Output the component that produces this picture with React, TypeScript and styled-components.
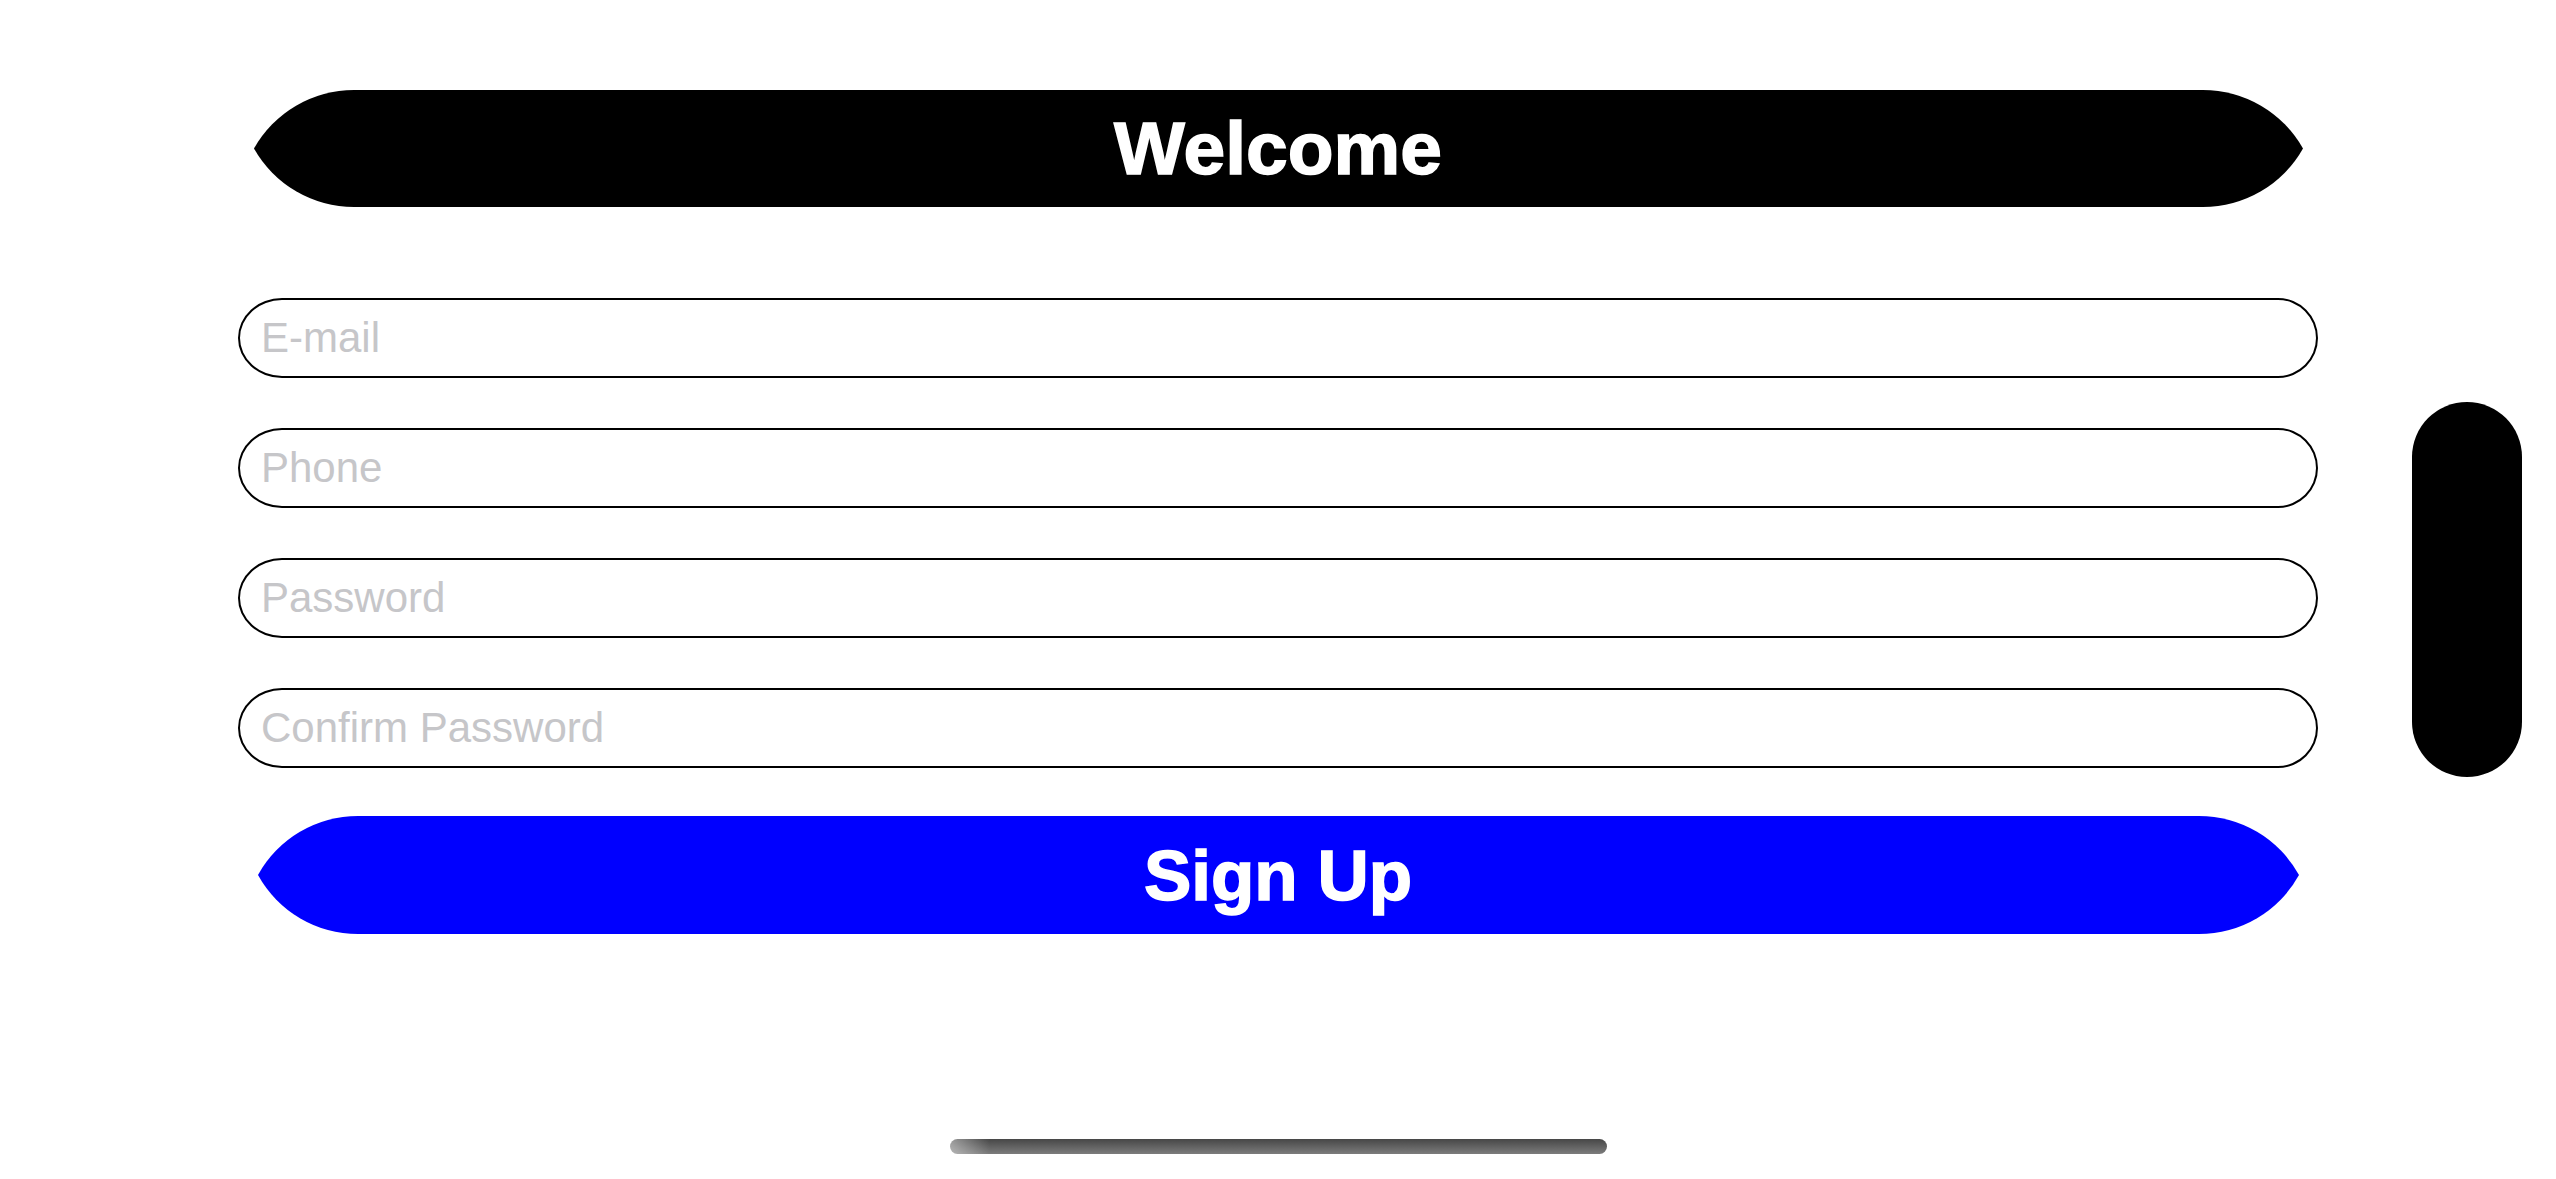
import styled, { createGlobalStyle } from "styled-components";

const GlobalStyle = createGlobalStyle`
  html, body {
    margin: 0;
    padding: 0;
    background: #ffffff;
  }
  body {
    font-family: "Liberation Sans", Arial, sans-serif;
  }
  * {
    box-sizing: border-box;
  }
`;

const Screen = styled.div`
  position: relative;
  width: 2556px;
  height: 1179px;
  overflow: hidden;
  background: #ffffff;
`;

const Form = styled.div`
  display: flex;
  flex-direction: column;
  align-items: center;
  padding-top: 90px;
`;

const Bar = styled.div<{ $width: number; $height: number; $color: string; $mt?: number }>`
  display: flex;
  flex-direction: row;
  align-items: stretch;
  width: ${(p) => p.$width}px;
  height: ${(p) => p.$height}px;
  margin-top: ${(p) => p.$mt ?? 0}px;
  color: ${(p) => p.$color};
  cursor: pointer;
`;

const BarMiddle = styled.div<{ $size: number }>`
  flex: 1;
  display: flex;
  align-items: center;
  justify-content: center;
  background: currentColor;
  margin: 0 -1px;
  span {
    color: #ffffff;
    font-family: "Liberation Sans", Arial, sans-serif;
    font-weight: 700;
    font-size: ${(p) => p.$size}px;
    line-height: 1;
    -webkit-text-stroke: 1.5px #ffffff;
  }
`;

const CapSvg = styled.svg`
  display: block;
  flex-shrink: 0;
  position: relative;
  z-index: 1;
`;

const Fields = styled.div`
  display: flex;
  flex-direction: column;
  gap: 50px;
  margin-top: 91px;
`;

const Field = styled.input`
  width: 2080px;
  height: 80px;
  border: 2px solid #000000;
  border-radius: 44px 40px 40px 44px / 40px;
  padding: 0 0 0 21px;
  font-family: "Liberation Sans", Arial, sans-serif;
  font-size: 42px;
  color: #000000;
  background: #ffffff;
  outline: none;
  &::placeholder {
    color: #c6c6c9;
  }
`;

const SideIsland = styled.div`
  position: absolute;
  left: 2412px;
  top: 402px;
  width: 110px;
  height: 375px;
  border-radius: 55px;
  background: #000000;
`;

const HomeIndicator = styled.div`
  position: absolute;
  left: 950px;
  top: 1139px;
  width: 657px;
  height: 15px;
  border-radius: 8px;
  background: linear-gradient(to right, rgba(255, 255, 255, 0.45), rgba(255, 255, 255, 0) 6%),
    linear-gradient(to bottom, #474747, #7c7c7c);
`;

function Cap({ side, w, h }: { side: "left" | "right"; w: number; h: number }) {
  const r = (w * w + (h / 2) * (h / 2)) / h;
  const d =
    side === "left"
      ? `M${w} 0 A${r} ${r} 0 0 0 0 ${h / 2} A${r} ${r} 0 0 0 ${w} ${h} Z`
      : `M0 0 A${r} ${r} 0 0 1 ${w} ${h / 2} A${r} ${r} 0 0 1 0 ${h} Z`;
  return (
    <CapSvg width={w} height={h} viewBox={`0 0 ${w} ${h}`}>
      <path d={d} fill="currentColor" />
    </CapSvg>
  );
}

function LensBar({
  label,
  width,
  height,
  color,
  size,
  mt,
}: {
  label: string;
  width: number;
  height: number;
  color: string;
  size: number;
  mt?: number;
}) {
  return (
    <Bar $width={width} $height={height} $color={color} $mt={mt}>
      <Cap side="left" w={100} h={height} />
      <BarMiddle $size={size}>
        <span>{label}</span>
      </BarMiddle>
      <Cap side="right" w={100} h={height} />
    </Bar>
  );
}

export default function App() {
  const fields = [
    { name: "email", placeholder: "E-mail", type: "email" },
    { name: "phone", placeholder: "Phone", type: "tel" },
    { name: "password", placeholder: "Password", type: "password" },
    { name: "confirm", placeholder: "Confirm Password", type: "password" },
  ];

  return (
    <Screen>
      <GlobalStyle />
      <Form>
        <LensBar label="Welcome" width={2049} height={117} color="#000000" size={75} />
        <Fields>
          {fields.map((f) => (
            <Field key={f.name} type={f.type} placeholder={f.placeholder} />
          ))}
        </Fields>
        <LensBar label="Sign Up" width={2041} height={118} color="#0000ff" size={71} mt={48} />
      </Form>
      <SideIsland />
      <HomeIndicator />
    </Screen>
  );
}
